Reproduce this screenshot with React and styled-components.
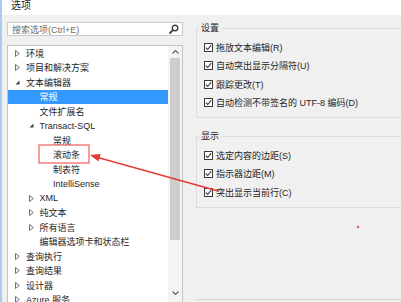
import React from 'react';
import styled, { createGlobalStyle } from 'styled-components';

const GlobalStyle = createGlobalStyle`
  html, body {
    margin: 0;
    padding: 0;
    background: #f0f0f0;
  }

  body {
    font-family: "Liberation Sans", "Noto Sans CJK SC", sans-serif;
  }
`;

const Stage = styled.div`
  position: relative;
  width: 401px;
  height: 302px;
  overflow: hidden;
`;

const Window = styled.div`
  width: 401px;
  height: 302px;
  box-sizing: border-box;
  border-left: 2px solid #a9cbef;
  background: #f0f0f0;
  display: flex;
  flex-direction: column;
  font-size: 9px;
  color: #1e1e1e;
`;

const TitleBar = styled.div`
  flex: none;
  height: 15px;
  background: #ffffff;
  padding-left: 9px;
  font-size: 10px;
  line-height: 11px;
`;

const Content = styled.div`
  display: flex;
  flex: 1;
  min-height: 0;
  padding-left: 5px;
`;

const Sidebar = styled.div`
  flex: none;
  width: 176px;
  padding-top: 7px;
  display: flex;
  flex-direction: column;
  gap: 9px;
`;

const SearchBox = styled.div`
  display: flex;
  align-items: center;
  justify-content: space-between;
  height: 14px;
  box-sizing: border-box;
  padding: 0 3px 0 4px;
  background: #ffffff;
  border: 1px solid #c9c9c9;
  color: #6d6d6d;
`;

const Tree = styled.div`
  flex: none;
  display: flex;
  height: 280px;
  box-sizing: border-box;
  background: #ffffff;
  border: 1px solid #c4c4c4;
`;

const TreeList = styled.div`
  flex: 1;
`;

const TreeRow = styled.div`
  display: flex;
  align-items: center;
  height: 14.5px;
  padding-left: ${(props) => 6 + props.level * 13.5}px;
  background: ${(props) => (props.selected ? '#3399ff' : 'transparent')};
  color: ${(props) => (props.selected ? '#ffffff' : '#1e1e1e')};
  white-space: nowrap;
`;

const Toggle = styled.span`
  flex: none;
  width: 12px;
  padding-left: 1px;
  box-sizing: border-box;
  display: flex;
  align-items: center;
`;

const Scrollbar = styled.div`
  flex: none;
  width: 14px;
  background: #f4f4f4;
  display: flex;
  flex-direction: column;
`;

const ScrollButton = styled.div`
  flex: none;
  height: 12px;
  display: flex;
  align-items: center;
  justify-content: center;
`;

const Thumb = styled.div`
  flex: none;
  height: 182px;
  margin: 0 2px;
  background: #cdcdcd;
`;

const Track = styled.div`
  flex: none;
  height: 47px;
`;

const Settings = styled.div`
  flex: none;
  width: 240px;
  height: 285px;
  box-sizing: border-box;
  margin-left: 13px;
  padding-top: 7px;
  border-bottom: 1px solid #d9d9d9;
  display: flex;
  flex-direction: column;
  gap: 12px;
`;

const Group = styled.fieldset`
  margin: 0;
  padding: 4px 0 5px 7px;
  border: 1px solid #dcdcdc;
  min-width: 0;
`;

const Legend = styled.legend`
  margin-left: -5px;
  padding: 0 2px;
  line-height: 12px;
  font-size: 9px;
`;

const CheckRow = styled.label`
  display: flex;
  align-items: center;
  gap: 3px;
  height: 18.5px;
  white-space: nowrap;
`;

const Box = styled.span`
  flex: none;
  width: 9px;
  height: 9px;
  box-sizing: border-box;
  border: 1px solid #3a3a3a;
  background: #ffffff;
  display: flex;
  align-items: center;
  justify-content: center;
`;

const Overlay = styled.svg`
  position: absolute;
  left: 0;
  top: 0;
  pointer-events: none;
`;

const treeItems = [
  { label: '环境', level: 0, toggle: 'closed' },
  { label: '项目和解决方案', level: 0, toggle: 'closed' },
  { label: '文本编辑器', level: 0, toggle: 'open' },
  { label: '常规', level: 1, selected: true },
  { label: '文件扩展名', level: 1 },
  { label: 'Transact-SQL', level: 1, toggle: 'open' },
  { label: '常规', level: 2 },
  { label: '滚动条', level: 2 },
  { label: '制表符', level: 2 },
  { label: 'IntelliSense', level: 2 },
  { label: 'XML', level: 1, toggle: 'closed' },
  { label: '纯文本', level: 1, toggle: 'closed' },
  { label: '所有语言', level: 1, toggle: 'closed' },
  { label: '编辑器选项卡和状态栏', level: 1 },
  { label: '查询执行', level: 0, toggle: 'closed' },
  { label: '查询结果', level: 0, toggle: 'closed' },
  { label: '设计器', level: 0, toggle: 'closed' },
  { label: 'Azure 服务', level: 0, toggle: 'closed' },
];

const groups = [
  {
    title: '设置',
    options: [
      '拖放文本编辑(R)',
      '自动突出显示分隔符(U)',
      '跟踪更改(T)',
      '自动检测不带签名的 UTF-8 编码(D)',
    ],
  },
  {
    title: '显示',
    options: ['选定内容的边距(S)', '指示器边距(M)', '突出显示当前行(C)'],
  },
];

const Triangle = ({ open }) =>
  open ? (
    <svg width="5" height="5" viewBox="0 0 5 5">
      <polygon points="4.5,0.5 4.5,4.5 0.5,4.5" fill="#404040" />
    </svg>
  ) : (
    <svg width="5" height="7" viewBox="0 0 5 7">
      <polygon points="0.5,0.5 4.3,3.5 0.5,6.5" fill="none" stroke="#707070" strokeWidth="1" />
    </svg>
  );

const SearchIcon = () => (
  <svg width="10" height="10" viewBox="0 0 10 10">
    <circle cx="6" cy="4" r="2.8" fill="none" stroke="#444" strokeWidth="1.4" />
    <line x1="4" y1="6" x2="1" y2="9" stroke="#444" strokeWidth="1.8" strokeLinecap="round" />
  </svg>
);

const Chevron = ({ down }) => (
  <svg width="7" height="4" viewBox="0 0 7 4">
    <polyline
      points={down ? '0.5,0.5 3.5,3.5 6.5,0.5' : '0.5,3.5 3.5,0.5 6.5,3.5'}
      fill="none"
      stroke="#606060"
      strokeWidth="1.1"
    />
  </svg>
);

const CheckBox = () => (
  <Box>
    <svg width="7" height="7" viewBox="0 0 7 7">
      <polyline points="0.8,3.6 2.7,5.5 6.2,1.2" fill="none" stroke="#333" strokeWidth="1.1" />
    </svg>
  </Box>
);

const App = () => (
  <Stage>
    <GlobalStyle />
    <Window>
      <TitleBar>选项</TitleBar>
      <Content>
        <Sidebar>
          <SearchBox>
            <span>搜索选项(Ctrl+E)</span>
            <SearchIcon />
          </SearchBox>
          <Tree>
            <TreeList>
              {treeItems.map((item, i) => (
                <TreeRow key={i} level={item.level} selected={item.selected}>
                  <Toggle>{item.toggle && <Triangle open={item.toggle === 'open'} />}</Toggle>
                  <span>{item.label}</span>
                </TreeRow>
              ))}
            </TreeList>
            <Scrollbar>
              <ScrollButton>
                <Chevron />
              </ScrollButton>
              <Thumb />
              <Track />
              <ScrollButton>
                <Chevron down />
              </ScrollButton>
            </Scrollbar>
          </Tree>
        </Sidebar>
        <Settings>
          {groups.map((group) => (
            <Group key={group.title}>
              <Legend>{group.title}</Legend>
              {group.options.map((option) => (
                <CheckRow key={option}>
                  <CheckBox />
                  <span>{option}</span>
                </CheckRow>
              ))}
            </Group>
          ))}
        </Settings>
      </Content>
    </Window>
    {/* annotation drawn over the screenshot */}
    <Overlay width="401" height="302">
      <rect x="39" y="145" width="50" height="18" fill="none" stroke="#f06a6a" strokeWidth="1.3" />
      <line x1="218" y1="191" x2="98" y2="157.5" stroke="#e63a36" strokeWidth="1.5" />
      <polygon points="90,155 100.7,153.9 98.5,161.6" fill="#e63a36" />
      <circle cx="358" cy="227" r="1.3" fill="#ff5a5a" />
    </Overlay>
  </Stage>
);

export default App;
